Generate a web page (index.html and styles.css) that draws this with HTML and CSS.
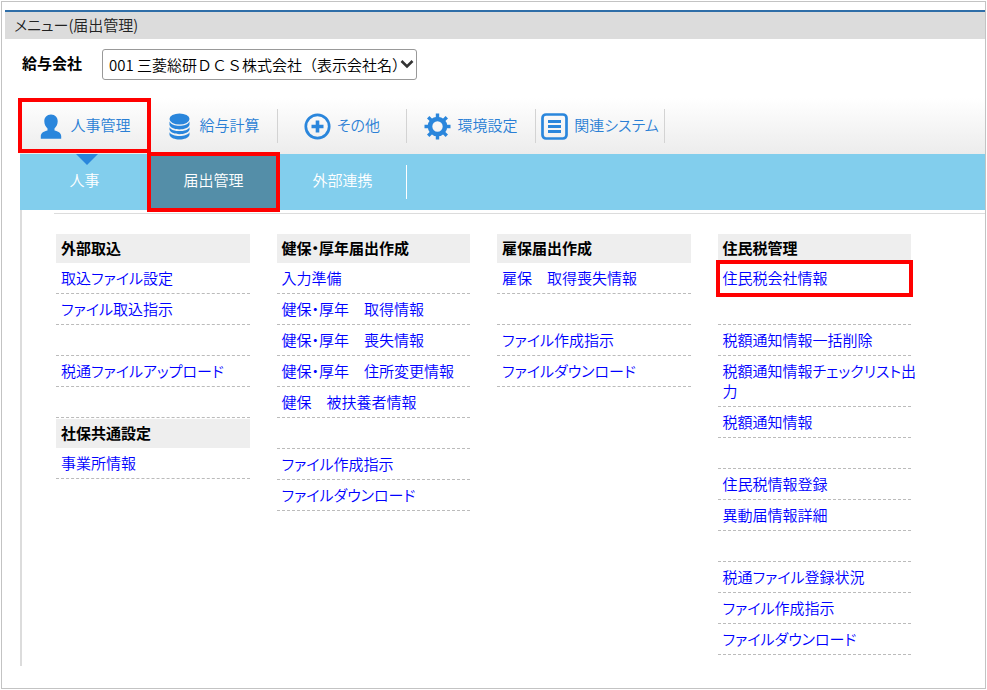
FILE: index.html
```html
<!DOCTYPE html>
<html lang="ja">
<head>
    <meta charset="UTF-8">
    <meta name="viewport" content="width=device-width, initial-scale=1.0">
    <title>メニュー(届出管理)</title>
    <link rel="stylesheet" href="styles.css">
</head>
<body>
    <div class="window">
        <h1 class="title-bar">メニュー(届出管理)</h1>

        <div class="company">
            <label for="company">給与会社</label>
            <div class="select-box">
                <select id="company">
                    <option>001 三菱総研ＤＣＳ株式会社（表示会社名）</option>
                </select>
                <svg class="arrow" width="14" height="10" viewBox="0 0 14 10"><path d="M1.5 2 L7 7.5 L12.5 2" fill="none" stroke="#333" stroke-width="2.6"/></svg>
            </div>
        </div>

        <nav class="main-nav">
            <a href="#" class="tab current marked">
                <svg class="icon" viewBox="0 0 27 27"><path d="M14 1.500c4.200 0 6.700 3 6.700 6.700 0 3.200-1.500 5.600-3.200 7.200v2c3.200.8 6.700 2.300 6.700 5.600v2.700H3.800v-2.700c0-3.300 3.500-4.800 6.700-5.600v-2C8.800 13.800 7.300 11.400 7.300 8.200 7.300 4.500 9.800 1.500 14 1.500z"/></svg>
                <span>人事管理</span>
            </a>
            <a href="#" class="tab">
                <svg class="icon" viewBox="0 0 27 27">
                    <ellipse cx="13.500" cy="6" rx="10" ry="5.500"/>
                    <path d="M3.500 8.500c1.500 3 5.500 4.200 10 4.200s8.500-1.200 10-4.200v3.500c-1 3-5.500 4.400-10 4.400s-9-1.400-10-4.400z"/>
                    <path d="M3.500 14.200c1.500 2.600 5.500 3.900 10 3.900s8.500-1.300 10-3.900v2.600c-1 3-5.500 4.400-10 4.400s-9-1.400-10-4.400z"/>
                    <path d="M3.500 19.300c1.500 2.600 5.500 3.700 10 3.700s8.500-1.100 10-3.700v2.700c-1 3-5.500 4.500-10 4.500s-9-1.500-10-4.500z"/>
                </svg>
                <span>給与計算</span>
            </a>
            <a href="#" class="tab">
                <svg class="icon" viewBox="0 0 27 27">
                    <circle cx="13.500" cy="13.500" r="11.700" fill="none" stroke="#2a86dc" stroke-width="2.700"/>
                    <path d="M11.700 7.500h3.600v4.200h4.200v3.600h-4.200v4.200h-3.600v-4.200H7.500v-3.600h4.200z"/>
                </svg>
                <span>その他</span>
            </a>
            <a href="#" class="tab">
                <svg class="icon" viewBox="0 0 27 27">
                    <circle cx="13.500" cy="13.500" r="7.500" fill="none" stroke="#2a86dc" stroke-width="4.600"/>
                    <g stroke="#2a86dc" stroke-width="3.400">
                        <path d="M13.500 0.500v4M13.500 22.500v4M0.500 13.500h4M22.500 13.500h4"/>
                        <path d="M4.200 4.200l3.200 3.200M19.600 19.600l3.200 3.200M4.200 22.800l3.200-3.200M19.600 7.400l3.200-3.200"/>
                    </g>
                </svg>
                <span>環境設定</span>
            </a>
            <a href="#" class="tab">
                <svg class="icon" viewBox="0 0 27 27">
                    <rect x="1.500" y="1.500" width="24" height="24" rx="3.500" fill="none" stroke="#2a86dc" stroke-width="2.700"/>
                    <path d="M7 7h13v3H7zM7 12h13v3H7zM7 17h13v3H7z"/>
                </svg>
                <span>関連システム</span>
            </a>
        </nav>

        <nav class="sub-nav">
            <a href="#" class="sub-tab">人事</a>
            <a href="#" class="sub-tab active marked">届出管理</a>
            <a href="#" class="sub-tab last">外部連携</a>
        </nav>

        <main class="content">
            <div class="columns">
                <section>
                    <h2>外部取込</h2>
                    <ul>
                        <li><a href="#">取込ファイル設定</a></li>
                        <li><a href="#">ファイル取込指示</a></li>
                        <li></li>
                        <li><a href="#">税通ファイルアップロード</a></li>
                        <li></li>
                    </ul>
                    <h2>社保共通設定</h2>
                    <ul>
                        <li><a href="#">事業所情報</a></li>
                    </ul>
                </section>
                <section>
                    <h2>健保・厚年届出作成</h2>
                    <ul>
                        <li><a href="#">入力準備</a></li>
                        <li><a href="#">健保・厚年　取得情報</a></li>
                        <li><a href="#">健保・厚年　喪失情報</a></li>
                        <li><a href="#">健保・厚年　住所変更情報</a></li>
                        <li><a href="#">健保　被扶養者情報</a></li>
                        <li></li>
                        <li><a href="#">ファイル作成指示</a></li>
                        <li><a href="#">ファイルダウンロード</a></li>
                    </ul>
                </section>
                <section>
                    <h2>雇保届出作成</h2>
                    <ul>
                        <li><a href="#">雇保　取得喪失情報</a></li>
                        <li></li>
                        <li><a href="#">ファイル作成指示</a></li>
                        <li><a href="#">ファイルダウンロード</a></li>
                    </ul>
                </section>
                <section>
                    <h2>住民税管理</h2>
                    <ul>
                        <li class="marked"><a href="#">住民税会社情報</a></li>
                        <li></li>
                        <li><a href="#">税額通知情報一括削除</a></li>
                        <li><a href="#">税額通知情報チェックリスト出<br>力</a></li>
                        <li><a href="#">税額通知情報</a></li>
                        <li></li>
                        <li><a href="#">住民税情報登録</a></li>
                        <li><a href="#">異動届情報詳細</a></li>
                        <li></li>
                        <li><a href="#">税通ファイル登録状況</a></li>
                        <li><a href="#">ファイル作成指示</a></li>
                        <li><a href="#">ファイルダウンロード</a></li>
                    </ul>
                </section>
            </div>
        </main>
    </div>
</body>
</html>
```
FILE: styles.css
```css
* {
    box-sizing: border-box;
}

body {
    margin: 1px;
    background-color: #fff;
    font-family: "Noto Sans CJK JP", sans-serif;
    font-size: 15px;
    font-weight: 350;
    font-feature-settings: "palt";
    line-height: 20px;
    color: #000;
}

a {
    text-decoration: none;
}

.window {
    border: 1px solid #c3c3c3;
    padding: 8px 0 22px;
}

.title-bar {
    margin: 0 0 0 3px;
    padding: 3px 9px 4px;
    border-top: 2px solid #2f6ea8;
    background-color: #dcdcdc;
    font-size: 15px;
    font-weight: 350;
    color: #222;
}

.company {
    display: flex;
    align-items: flex-start;
    gap: 20px;
    padding: 10px 20px 18px;
}

.company label {
    padding-top: 4px;
    font-weight: bold;
}

.select-box {
    position: relative;
}

.company select {
    appearance: none;
    display: block;
    width: 315px;
    height: 31px;
    padding: 0 16px 0 6px;
    border: 1px solid #999;
    border-radius: 3px;
    background-color: #fff;
    font: inherit;
    font-feature-settings: normal;
    color: #000;
}

.arrow {
    position: absolute;
    right: 3px;
    top: 10px;
    pointer-events: none;
}

/* main menu */
.main-nav {
    display: flex;
    margin-left: 18px;
    padding: 11px 0;
    background: linear-gradient(#fff, #ececec);
}

.tab {
    position: relative;
    display: flex;
    align-items: center;
    justify-content: center;
    gap: 6px;
    width: 129px;
    height: 34px;
    border-right: 1px solid #d3d3d3;
    color: #2a7fd5;
    white-space: nowrap;
}

.tab span {
    padding-bottom: 2px;
}

.icon {
    flex: none;
    width: 27px;
    height: 27px;
    fill: #2a86dc;
}

/* pointer under the open menu */
.current::before {
    content: "";
    position: absolute;
    left: 56px;
    top: 45px;
    border: 11px solid transparent;
    border-top-color: #2a86dc;
    border-bottom: 0;
    z-index: 1;
}

.sub-nav {
    display: flex;
    margin-left: 18px;
    background-color: #82ceed;
}

.sub-tab {
    position: relative;
    width: 129px;
    padding: 16px 0 20px;
    text-align: center;
    color: #fff;
}

.active {
    background-color: #548ea8;
}

.last::before {
    content: "";
    position: absolute;
    right: 0;
    top: 11px;
    height: 34px;
    border-right: 1px solid #fff;
}

/* red frames */
.marked::after {
    content: "";
    position: absolute;
    border: 4px solid #f00;
    z-index: 2;
    pointer-events: none;
}

.tab.marked::after {
    inset: -11px -3px -10px -2px;
}

.sub-tab.marked::after {
    inset: -2px;
}

li.marked::after {
    inset: -3px -2px -4px;
}

/* link lists */
.content {
    margin-left: 18px;
    padding: 3px 0 11px 32px;
    border-left: 2px solid #dcdcdc;
}

.columns {
    display: grid;
    grid-template-columns: repeat(4, minmax(0, 1fr));
    align-items: start;
    gap: 27px;
    padding: 20px 74px 0 2px;
    border-top: 1px solid #dcdcdc;
}

.columns h2 {
    margin: 0;
    padding: 4px 5px 5px;
    background-color: #eee;
    font-size: 15px;
    font-weight: bold;
}

.columns ul {
    margin: 0;
    padding: 0;
    list-style: none;
}

.columns ul + h2 {
    margin-top: 1px;
}

.columns li {
    position: relative;
    min-height: 31px;
    padding: 5px;
    border-bottom: 1px dashed #bbb;
    white-space: nowrap;
}

.columns a {
    color: #00f;
}
```
